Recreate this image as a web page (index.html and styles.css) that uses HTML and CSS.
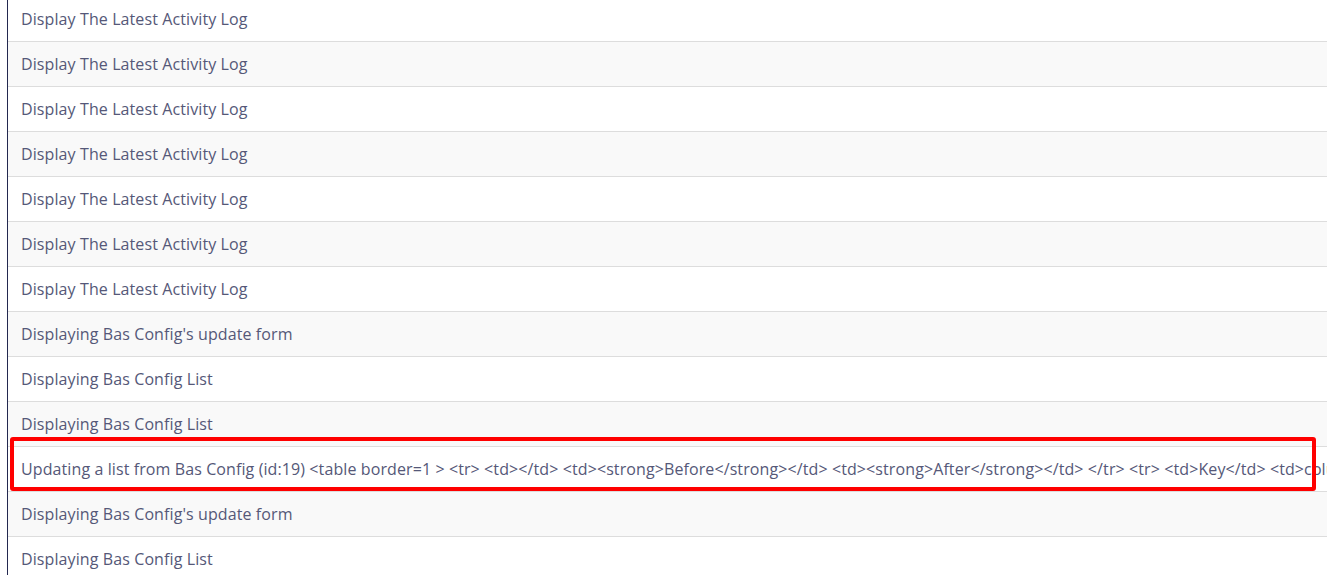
FILE: index.html
```html
<!DOCTYPE html>
<html>
<head>
<meta charset="utf-8">
<link rel="stylesheet" href="styles.css">
</head>
<body>
<div class="frame">
  <table class="log">
    <tbody>
      <tr><td>Display The Latest Activity Log</td></tr>
      <tr><td>Display The Latest Activity Log</td></tr>
      <tr><td>Display The Latest Activity Log</td></tr>
      <tr><td>Display The Latest Activity Log</td></tr>
      <tr><td>Display The Latest Activity Log</td></tr>
      <tr><td>Display The Latest Activity Log</td></tr>
      <tr><td>Display The Latest Activity Log</td></tr>
      <tr><td>Displaying Bas Config's update form</td></tr>
      <tr><td>Displaying Bas Config List</td></tr>
      <tr><td>Displaying Bas Config List</td></tr>
      <tr class="marked"><td>Updating a list from Bas Config (id:19) &lt;table border=1 &gt; &lt;tr&gt; &lt;td&gt;&lt;/td&gt; &lt;td&gt;&lt;strong&gt;Before&lt;/strong&gt;&lt;/td&gt; &lt;td&gt;&lt;strong&gt;After&lt;/strong&gt;&lt;/td&gt; &lt;/tr&gt; &lt;tr&gt; &lt;td&gt;Key&lt;/td&gt; &lt;td&gt;column_name&lt;/td&gt; &lt;td&gt;column_name&lt;/td&gt; &lt;/tr&gt;</td></tr>
      <tr><td>Displaying Bas Config's update form</td></tr>
      <tr><td>Displaying Bas Config List</td></tr>
    </tbody>
  </table>
</div>
<div class="highlight"></div>
</body>
</html>
```
FILE: styles.css
```css
html, body {
  margin: 0;
  padding: 0;
  background: #ffffff;
  overflow: hidden;
  height: 575px;
}
body {
  font-family: "Open Sans", "Liberation Sans", sans-serif;
  font-size: 16px;
  letter-spacing: 0.1px;
  color: #555878;
  position: relative;
}
.frame {
  margin-left: 7px;
  margin-top: -4px;
  border-left: 1px solid #23284f;
  min-height: 600px;
}
.log {
  border-collapse: collapse;
  min-width: 100%;
}
.log td {
  height: 44px;
  padding: 0 13px;
  border-top: 1px solid #dddddd;
  vertical-align: middle;
  white-space: nowrap;
}
.log tr:first-child td {
  border-top: none;
  height: 45px;
}
.log tr:nth-child(even) td {
  background: #f9f9f9;
}
.highlight {
  position: absolute;
  left: 10px;
  top: 437px;
  width: 1298px;
  height: 46px;
  border: 4px solid #ff0000;
  border-radius: 3px;
}
```
